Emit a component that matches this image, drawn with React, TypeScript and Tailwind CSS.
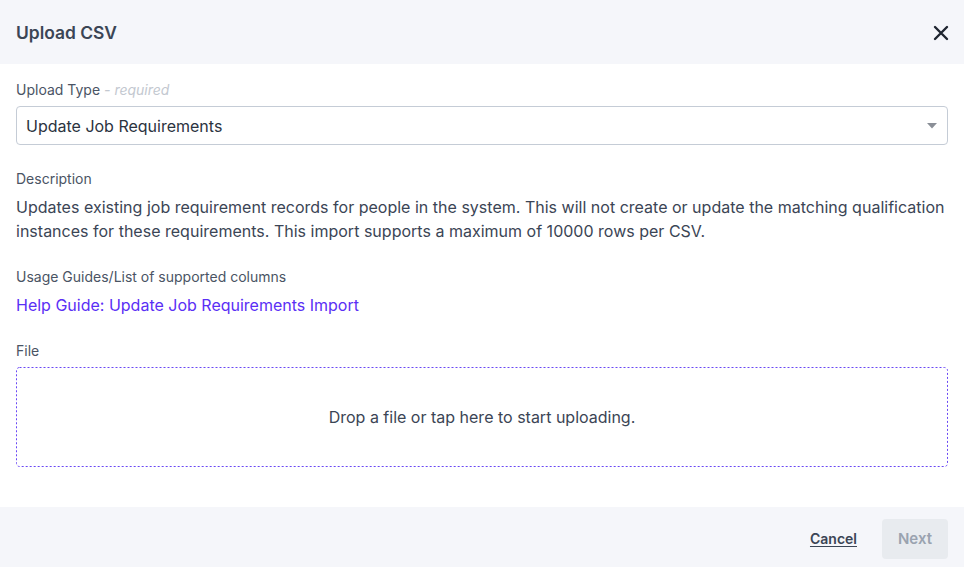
export default function App() {
  return (
    <div className="w-[964px] h-[567px] bg-white flex flex-col text-[#3b4555]" style={{ fontFamily: 'Inter, "Noto Sans", sans-serif' }}>
      <div className="h-16 bg-[#f5f6fa] flex items-center justify-between pl-4 pr-[15px] pt-0.5 shrink-0">
        <h1 className="text-[17.4px] font-semibold text-[#3b4555]">Upload CSV</h1>
        <svg width="16" height="16" viewBox="0 0 16 16" className="text-[#1f2530]">
          <path d="M2 2 L14 14 M14 2 L2 14" stroke="currentColor" strokeWidth="2.4" strokeLinecap="round" />
        </svg>
      </div>
      <div className="flex-1 px-4 pt-4 flex flex-col">
        <div className="text-sm leading-5 text-[#4a5464]">
          Upload Type <span className="italic text-[#c3c8d0]">- required</span>
        </div>
        <div className="mt-1.5 h-[39px] border border-[#c5ccd6] rounded flex items-center justify-between pl-[9px] pr-[10px]">
          <span className="text-base text-[#2b3340]">Update Job Requirements</span>
          <svg width="10" height="6" viewBox="0 0 10 6"><path d="M0 0 H10 L5 5.5 Z" fill="#8a8f97" /></svg>
        </div>
        <div className="mt-6 text-sm leading-5 text-[#4a5464]">Description</div>
        <p className="mt-1.5 text-base leading-6 text-[#3b4555] tracking-[0.01px]">
          Updates existing job requirement records for people in the system. This will not create or update the matching qualification instances for these requirements. This import supports a maximum of 10000 rows per CSV.
        </p>
        <div className="mt-6 text-sm leading-5 text-[#4a5464]">Usage Guides/List of supported columns</div>
        <a className="mt-1.5 text-base leading-6 text-[#5a2ff5] self-start">Help Guide: Update Job Requirements Import</a>
        <div className="mt-6 text-sm leading-5 text-[#4a5464]">File</div>
        <div className="relative mt-1.5 h-[100px] flex items-center justify-center">
          <svg className="absolute inset-0 w-full h-full pointer-events-none" preserveAspectRatio="none">
            <rect x="0.5" y="0.5" width="931" height="99" rx="3" fill="none" stroke="#6a48f5" strokeWidth="1" strokeDasharray="2 2" />
          </svg>
          <span className="text-base text-[#3b4555]">Drop a file or tap here to start uploading.</span>
        </div>
      </div>
      <div className="h-[60px] bg-[#f5f6fa] flex items-center justify-end gap-[25px] px-4 pt-1 shrink-0">
        <button className="text-sm font-semibold underline underline-offset-2 text-[#3b4555]">Cancel</button>
        <button className="h-10 w-[66px] rounded bg-[#e8ebef] text-[15px] font-semibold text-[#9aa3b0]">Next</button>
      </div>
    </div>
  );
}
